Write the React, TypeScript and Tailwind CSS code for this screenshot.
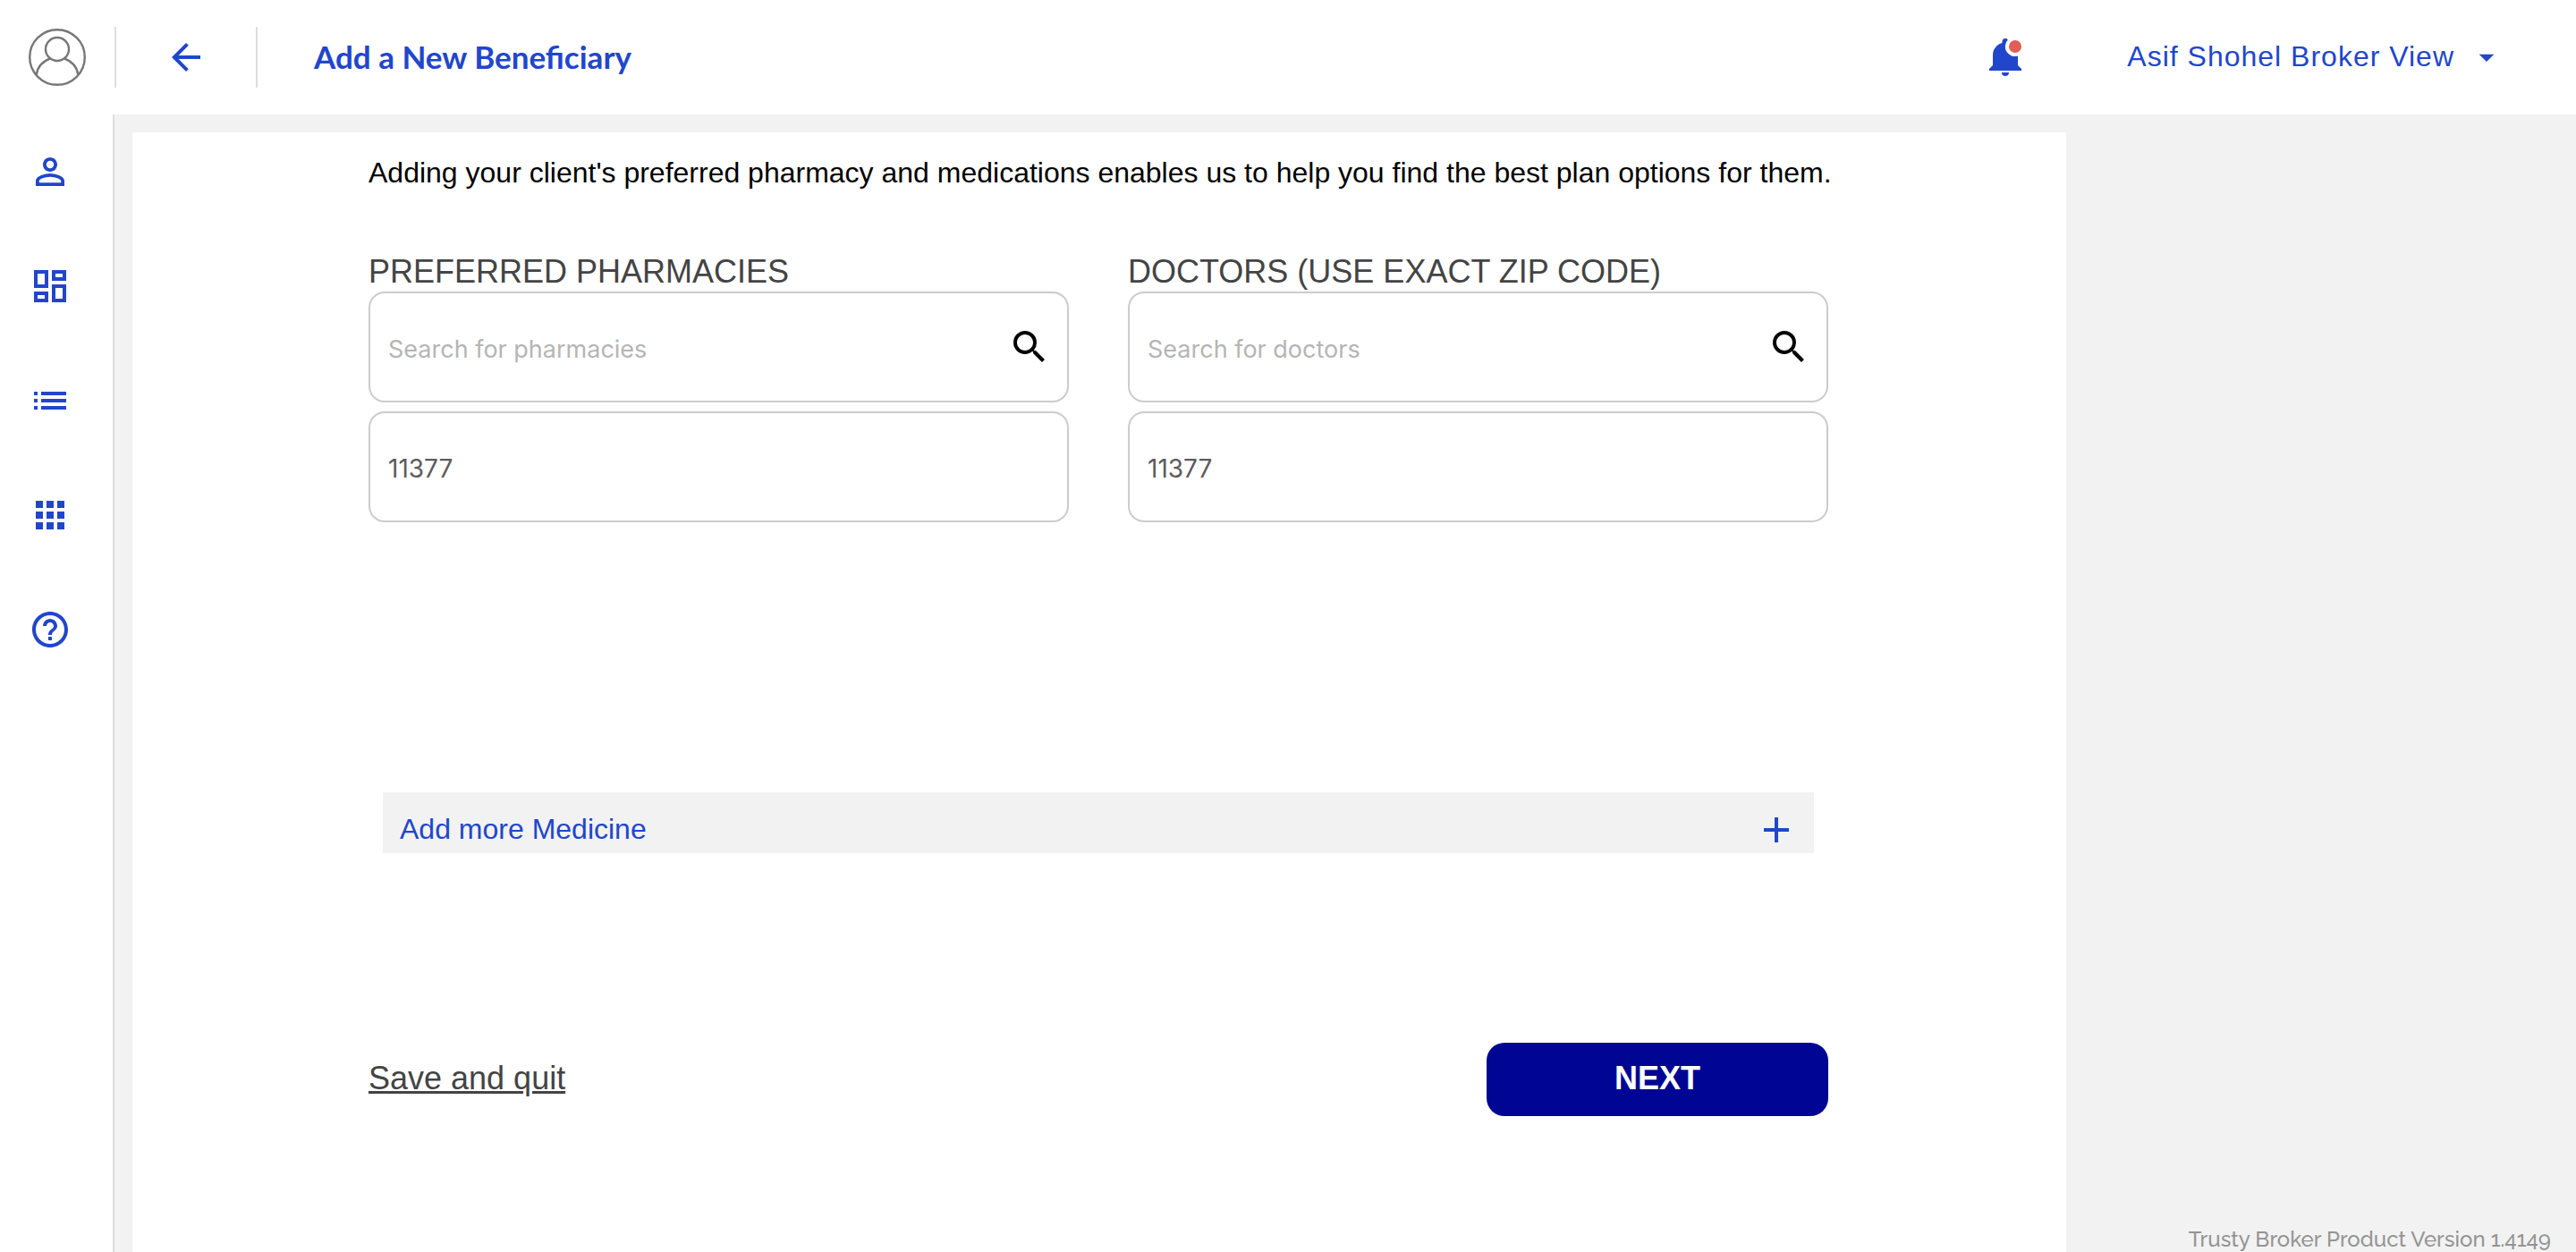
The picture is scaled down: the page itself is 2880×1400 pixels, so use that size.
import type { ReactNode } from "react";
import {
  MdApps,
  MdArrowBack,
  MdArrowDropDown,
  MdAdd,
  MdHelpOutline,
  MdList,
  MdOutlineDashboard,
  MdPersonOutline,
  MdSearch,
} from "react-icons/md";

function Avatar() {
  return (
    <svg viewBox="0 0 64 64" className="size-16 text-[#777777]" fill="none" stroke="currentColor" strokeWidth="2.4" aria-hidden="true">
      <circle cx="32" cy="32" r="30.800" />
      <circle cx="32" cy="23" r="13" />
      <path d="M8.700 51.500C10 43 16 36.500 24 33.700M55.300 51.500C54 43 48 36.500 40 33.700" />
    </svg>
  );
}

function Bell() {
  return (
    <svg viewBox="0 0 36 42" className="h-[42px] w-9" aria-hidden="true">
      <path
        fill="#2146cb"
        d="M18 0c-2.200 0-3.500 1.500-3.500 3.500v1.500C8.500 6.500 4 12 4 18.500V30l-4 4v2h36v-2l-4-4V19.600A11 11 0 0 1 20.800 1.500C20 .400 19 0 18 0ZM14 38h8a4 4 0 0 1-8 0Z"
      />
      <circle cx="29" cy="9" r="7" fill="#e05d58" />
    </svg>
  );
}

function NavItem({ label, children }: { label: string; children: ReactNode }) {
  return (
    <a href="#" aria-label={label} className="flex size-12 items-center justify-center text-5xl text-[#2146cb]">
      {children}
    </a>
  );
}

const field =
  "h-[124px] w-full rounded-[18px] border-2 border-[#cccccc] bg-white px-5 pt-1 font-[Inter,sans-serif] text-[28px] text-[#5c5c5c] outline-none placeholder:text-[27px] placeholder:text-[#b5b5b5] placeholder:opacity-100";

function SearchGroup({ id, title, placeholder }: { id: string; title: string; placeholder: string }) {
  return (
    <section className="flex min-w-0 flex-1 flex-col gap-2.5">
      <div>
        <label htmlFor={id} className="block text-4xl leading-[44px] text-[#444444]">
          {title}
        </label>
        <div className="relative">
          <input id={id} type="text" placeholder={placeholder} className={field} />
          <button type="button" aria-label="Search" className="absolute top-9.5 right-5 text-5xl text-black">
            <MdSearch />
          </button>
        </div>
      </div>
      <input type="text" aria-label="ZIP code" defaultValue="11377" className={field} />
    </section>
  );
}

export default function App() {
  return (
    <div className="flex min-h-screen flex-col bg-[#f2f2f2] font-['Liberation_Sans',Arial,sans-serif]">
      <header className="flex h-32 items-center bg-white text-[#2146cb]">
        <div className="flex h-[68px] w-[130px] items-center border-r-2 border-[#dddddd] pl-8">
          <Avatar />
        </div>
        <div className="flex h-[68px] w-[158px] items-center justify-center border-r-2 border-[#dddddd]">
          <button type="button" aria-label="Back" className="text-5xl">
            <MdArrowBack />
          </button>
        </div>
        <h1 className="flex-1 pb-0.5 pl-[63px] font-[Lato,sans-serif] text-[35px] font-bold">Add a New Beneficiary</h1>
        <button type="button" aria-label="Notifications" className="mr-[118px]">
          <Bell />
        </button>
        <button type="button" className="mr-20 flex items-center gap-4 text-[32px] tracking-[1px]">
          <span className="pb-0.5">Asif Shohel Broker View</span>
          <MdArrowDropDown className="text-[40px]" />
        </button>
      </header>

      <div className="grid flex-1 grid-cols-[128px_minmax(0,2182fr)_minmax(0,570fr)]">
        <nav className="flex flex-col gap-20 border-r-2 border-[#dddddd] bg-white pt-10 pl-8">
          <NavItem label="Profile"><MdPersonOutline /></NavItem>
          <NavItem label="Dashboard"><MdOutlineDashboard /></NavItem>
          <NavItem label="List"><MdList /></NavItem>
          <NavItem label="Apps"><MdApps /></NavItem>
          <NavItem label="Help"><MdHelpOutline /></NavItem>
        </nav>

        <main className="mt-5 ml-5 flex flex-col bg-white pt-6 pr-[266px] pl-[264px]">
          <p className="text-[32px] leading-[42px] text-black xl:whitespace-nowrap">
            Adding your client's preferred pharmacy and medications enables us to help you find the best plan options for them.
          </p>
          <div className="mt-[68px] flex gap-[66px]">
            <SearchGroup id="pharmacies" title="PREFERRED PHARMACIES" placeholder="Search for pharmacies" />
            <SearchGroup id="doctors" title="DOCTORS (USE EXACT ZIP CODE)" placeholder="Search for doctors" />
          </div>
          <button
            type="button"
            className="mx-4 mt-[302px] flex h-[68px] items-center justify-between bg-[#f2f2f2] pt-4 pr-[18px] pl-[19px] text-[32px] text-[#2146cb]"
          >
            <span className="pb-0.5">Add more Medicine</span>
            <MdAdd className="text-5xl" />
          </button>
          <div className="mt-[212px] flex items-center justify-between">
            <a href="#" className="pb-0.5 text-4xl text-[#444444] underline">
              Save and quit
            </a>
            <button type="button" className="h-[82px] w-[382px] rounded-[20px] bg-[#000693] pb-0.5 text-4xl font-bold text-white">
              NEXT
            </button>
          </div>
        </main>

        <footer className="flex items-end justify-end pr-7 text-right font-[Raleway,Lato,sans-serif] text-2xl leading-7 font-medium text-[#949494]">
          Trusty Broker Product Version 1.4149
        </footer>
      </div>
    </div>
  );
}
